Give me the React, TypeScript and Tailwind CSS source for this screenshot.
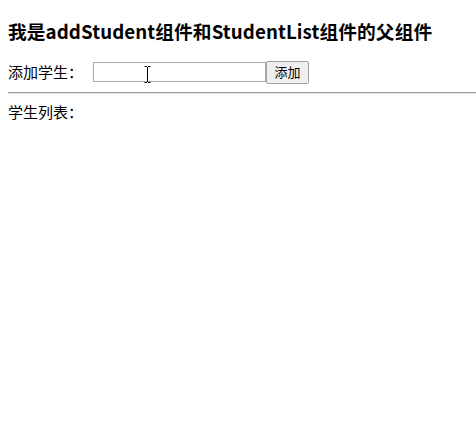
import React from "react";

export default function App() {
  return (
    <div
      className="relative w-[476px] h-[422px] bg-white text-black overflow-hidden"
      style={{ fontFamily: '"Noto Sans CJK SC", "Noto Sans", sans-serif' }}
    >
      <div className="pl-2 pt-[20px]">
        <h3 className="text-[18.7px] font-bold leading-[22px] h-[22px] tracking-[0.1px] whitespace-nowrap">
          我是addStudent组件和StudentList组件的父组件
        </h3>
      </div>
      <div className="pl-2 mt-[18px] flex items-center h-[24px] text-[15px]">
        <span className="leading-[20px]">添加学生：</span>
        <input
          className="ml-[10px] w-[173px] h-[20px] border border-[#a9a9a9] bg-white outline-none"
          type="text"
        />
        <button className="h-[23px] w-[43px] border border-[#a0a0a0] rounded-[2px] bg-[#efefef] text-[13px] leading-[20px] flex items-center justify-center">
          添加
        </button>
      </div>
      <div className="ml-2 mt-[8px] border-t border-[#9a9a9a] border-b border-b-[#e8e8e8] h-[2px]" />
      <div className="pl-2 mt-[8px] text-[15px] leading-[20px]">学生列表：</div>
      <svg
        className="absolute left-[144px] top-[66px]"
        width="7"
        height="17"
        viewBox="0 0 7 17"
      >
        <path d="M0.5 0.5h2.5M4 0.5h2.5M3.5 1v15M0.5 16.5h2.5M4 16.5h2.5" stroke="#000" strokeWidth="1" fill="none" />
      </svg>
    </div>
  );
}
